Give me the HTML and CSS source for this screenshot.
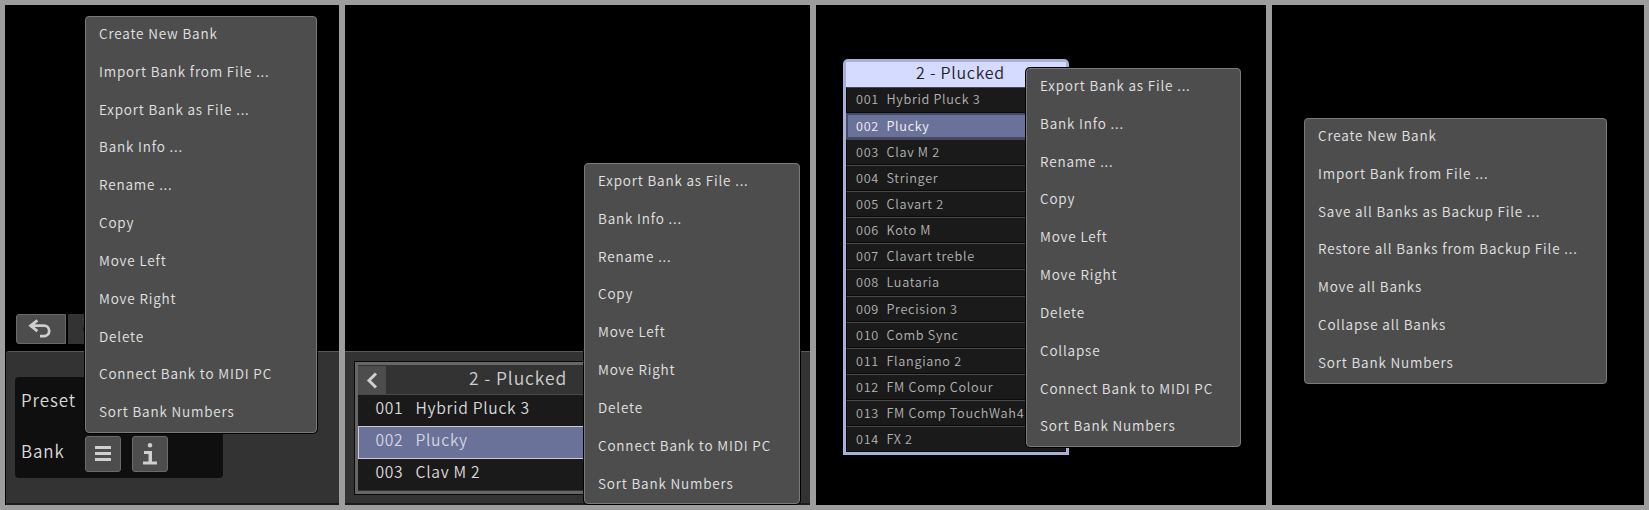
FILE: index.html
```html
<!DOCTYPE html>
<html lang="en">
<head>
<meta charset="utf-8">
<title>Bank menus</title>
<link rel="stylesheet" href="styles.css">
</head>
<body>
<main class="board">
  <section class="panel panel-a">
    <div class="history">
      <div class="tool undo">
        <svg width="24" height="20" viewBox="0 0 24 20"><path d="M3 6.7H16a5.2 5.2 0 0 1 0 10.4h-4M9.4 1.3L2.6 6.7l6.8 5.4" fill="none" stroke="#cfcfcf" stroke-width="2.8"/></svg>
      </div>
      <div class="tool redo"><i class="redo-tip"></i></div>
    </div>
    <div class="dock">
      <div class="info">
        <div class="info-row"><span class="label">Preset</span></div>
        <div class="info-row"><span class="label">Bank</span>
          <div class="btn"><svg width="16" height="16" viewBox="0 0 16 16"><path d="M0 0h16v3H0zM0 6h16v3H0zM0 12h16v3H0z" fill="#cfcfcf"/></svg></div>
          <div class="btn"><svg width="16" height="22" viewBox="0 0 16 22"><circle cx="8" cy="2.3" r="2.2" fill="#cfcfcf"/><path d="M2 8h8v10.500h5v3H1v-3h5.500v-7.500H2z" fill="#cfcfcf"/></svg></div>
        </div>
      </div>
    </div>
    <ul class="menu menu-a">
      <li>Create New Bank</li><li>Import Bank from File ...</li><li>Export Bank as File ...</li><li>Bank Info ...</li><li>Rename ...</li><li>Copy</li><li>Move Left</li><li>Move Right</li><li>Delete</li><li>Connect Bank to MIDI PC</li><li>Sort Bank Numbers</li>
    </ul>
  </section>
  <section class="panel panel-b">
    <div class="dock dock-b">
      <div class="browser">
        <div class="browser-head">
          <div class="back"><svg width="12" height="17" viewBox="0 0 12 17"><path d="M10 1.500L3 8.500l7 7" fill="none" stroke="#cfcfcf" stroke-width="3"/></svg></div>
          <span class="browser-title">2 - Plucked</span>
        </div>
        <div class="line"><span class="num">001</span>Hybrid Pluck 3</div>
        <div class="line current"><span class="num">002</span>Plucky</div>
        <div class="line"><span class="num">003</span>Clav M 2</div>
      </div>
    </div>
    <ul class="menu menu-b">
      <li>Export Bank as File ...</li><li>Bank Info ...</li><li>Rename ...</li><li>Copy</li><li>Move Left</li><li>Move Right</li><li>Delete</li><li>Connect Bank to MIDI PC</li><li>Sort Bank Numbers</li>
    </ul>
  </section>
  <section class="panel panel-c">
    <div class="bank">
      <div class="bank-head">2 - Plucked</div>
      <div class="slot"><span>001</span>Hybrid Pluck 3</div>
      <div class="slot active"><span>002</span>Plucky</div>
      <div class="slot"><span>003</span>Clav M 2</div>
      <div class="slot"><span>004</span>Stringer</div>
      <div class="slot"><span>005</span>Clavart 2</div>
      <div class="slot"><span>006</span>Koto M</div>
      <div class="slot"><span>007</span>Clavart treble</div>
      <div class="slot"><span>008</span>Luataria</div>
      <div class="slot"><span>009</span>Precision 3</div>
      <div class="slot"><span>010</span>Comb Sync</div>
      <div class="slot"><span>011</span>Flangiano 2</div>
      <div class="slot"><span>012</span>FM Comp Colour</div>
      <div class="slot"><span>013</span>FM Comp TouchWah4</div>
      <div class="slot"><span>014</span>FX 2</div>
    </div>
    <ul class="menu menu-c">
      <li>Export Bank as File ...</li><li>Bank Info ...</li><li>Rename ...</li><li>Copy</li><li>Move Left</li><li>Move Right</li><li>Delete</li><li>Collapse</li><li>Connect Bank to MIDI PC</li><li>Sort Bank Numbers</li>
    </ul>
  </section>
  <section class="panel panel-d">
    <ul class="menu menu-d">
      <li>Create New Bank</li><li>Import Bank from File ...</li><li>Save all Banks as Backup File ...</li><li>Restore all Banks from Backup File ...</li><li>Move all Banks</li><li>Collapse all Banks</li><li>Sort Bank Numbers</li>
    </ul>
  </section>
</main>
</body>
</html>
```
FILE: styles.css
```css
* { box-sizing: border-box; }
body {
  margin: 0;
  background: #9d9d9d;
  font-family: "Noto Sans CJK SC", "Noto Sans", sans-serif;
  font-weight: 350;
  font-size: 13.5px;
  letter-spacing: 0.84px;
  white-space: nowrap;
  overflow: hidden;
}
.board {
  display: grid;
  grid-template-columns: 334px 465px 450px 372px;
  gap: 6px;
  width: 1649px;
  height: 510px;
  padding: 5px;
}
.panel { position: relative; background: #000; overflow: hidden; }
.panel-a, .panel-b { display: flex; flex-direction: column; justify-content: flex-end; }

.menu {
  position: absolute;
  margin: 0;
  padding: 0;
  list-style: none;
  background: #4d4d4d;
  border: 1px solid #7a7a7a;
  border-radius: 4px;
  box-shadow: 0 0 0 1px #000;
  color: #e2e2e2;
}
.menu li { height: 37.83px; padding-left: 13px; line-height: 33.4px; }
.menu li:last-child { height: 36.6px; }
.menu-a { left: 80px; top: 11px; width: 232px; }
.menu-b { left: 239px; top: 158px; width: 216px; }
.menu-c { left: 210px; top: 63px; width: 215px; }
.menu-d { left: 32px; top: 113px; width: 303px; }

.history { display: flex; gap: 2px; padding-left: 11px; margin-bottom: 7px; }
.tool { display: flex; align-items: center; height: 30px; }
.undo { width: 50px; padding-left: 11px; background: #4d4d4d; border: 1px solid #6a6a6a; border-radius: 3px 0 0 3px; }
.redo { width: 50px; padding-left: 15px; background: #333; }
.redo-tip { width: 8px; height: 8px; border-radius: 50%; background: #181818; }
.dock {
  height: 154px;
  margin-left: 1px;
  padding: 25px 9px;
  background: #333;
  border-top: 1px solid #595959;
  border-bottom: 2px solid #1c1c1c;
  border-radius: 3px 0 0 0;
}
.info { width: 208px; height: 101px; padding-left: 6px; background: #0f0f0f; border-radius: 4px; }
.info-row { display: flex; align-items: center; height: 50px; font-size: 17px; letter-spacing: 0.9px; color: #dadada; }
.info-row + .info-row { height: 54px; }
.label { width: 64px; padding-bottom: 4px; line-height: 26px; }
.info-row + .info-row .label { padding-bottom: 6px; }
.btn {
  display: flex; align-items: center; justify-content: center;
  width: 36px; height: 36px; margin-right: 11px;
  background: #4d4d4d; border: 1px solid #6a6a6a; border-radius: 3px;
}

.dock-b { margin-left: 0; padding: 9px; border-radius: 0; }
.browser { width: 440px; height: 134px; border: 1px solid #0a0a0a; box-shadow: inset 0 0 0 3px #666; padding: 4px 3px; }
.browser-head { display: flex; height: 29px; background: #333; border-bottom: 1px solid #4a4a4a; }
.back { display: flex; align-items: center; justify-content: center; width: 28px; background: #4d4d4d; }
.browser-title { padding-left: 83px; font-size: 17.5px; letter-spacing: 0.9px; line-height: 24px; color: #cfcfcf; }
.line { display: flex; height: 31px; padding-left: 17.5px; background: #1a1a1a; color: #dadada; font-size: 15.7px; letter-spacing: 0.7px; line-height: 26px; }
.line.current { height: 33px; padding-left: 16.5px; line-height: 25px; background: #6b7299; border: 1px solid #cfcbd6; color: #d5d6de; }
.num { width: 40px; }

.bank {
  width: 226px;
  margin: 54px 0 0 27px;
  border: 3px solid #a9b0d8;
  border-radius: 5px 5px 0 0;
}
.bank-head { height: 25px; padding-left: 9px; background: #d5dbff; color: #222; font-size: 16px; letter-spacing: 0.75px; line-height: 21px; text-align: center; }
.slot {
  display: flex;
  height: 26.07px;
  padding-left: 9px;
  background: #1a1a1a;
  border: 1px solid #0a0a0a;
  border-top: 1px solid #484848;
  color: #b4b4b4;
  font-size: 12.7px;
  letter-spacing: 0.67px;
  line-height: 23px;
}
.slot:nth-child(2) { line-height: 22px; }
.slot.active { background: #6b7299; border: 2px solid #444a68; line-height: 22px; padding-left: 8px; color: #f4f4f8; }
.slot span { width: 30.5px; }
```
